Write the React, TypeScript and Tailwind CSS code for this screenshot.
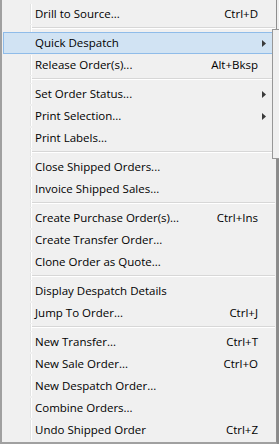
import React from "react";

type Item =
  | { type: "sep" }
  | { type: "item"; label: string; shortcut?: string; sub?: boolean; active?: boolean };

const items: Item[] = [
  { type: "item", label: "Drill to Source...", shortcut: "Ctrl+D" },
  { type: "sep" },
  { type: "item", label: "Quick Despatch", sub: true, active: true },
  { type: "item", label: "Release Order(s)...", shortcut: "Alt+Bksp" },
  { type: "sep" },
  { type: "item", label: "Set Order Status...", sub: true },
  { type: "item", label: "Print Selection...", sub: true },
  { type: "item", label: "Print Labels..." },
  { type: "sep" },
  { type: "item", label: "Close Shipped Orders..." },
  { type: "item", label: "Invoice Shipped Sales..." },
  { type: "sep" },
  { type: "item", label: "Create Purchase Order(s)...", shortcut: "Ctrl+Ins" },
  { type: "item", label: "Create Transfer Order..." },
  { type: "item", label: "Clone Order as Quote..." },
  { type: "sep" },
  { type: "item", label: "Display Despatch Details" },
  { type: "item", label: "Jump To Order...", shortcut: "Ctrl+J" },
  { type: "sep" },
  { type: "item", label: "New Transfer...", shortcut: "Ctrl+T" },
  { type: "item", label: "New Sale Order...", shortcut: "Ctrl+O" },
  { type: "item", label: "New Despatch Order..." },
  { type: "item", label: "Combine Orders..." },
  { type: "item", label: "Undo Shipped Order", shortcut: "Ctrl+Z" },
];

function Arrow() {
  return (
    <svg width="4" height="7" viewBox="0 0 4 7" className="block">
      <polygon points="0,0 4,3.5 0,7" fill="#3a3a3a" />
    </svg>
  );
}

export default function App() {
  return (
    <div
      className="relative w-[279px] h-[444px] overflow-hidden bg-[#f0f0f0] flex text-black"
      style={{ fontFamily: '"Open Sans", "Noto Sans", sans-serif' }}
    >
      <div className="w-[277px] h-[444px] border-l-2 border-b-2 border-r border-l-[#a0a0a0] border-b-[#a0a0a0] border-r-[#8e8e8e] pl-px pr-px pt-[3px] flex flex-col">
        {items.map((it, i) =>
          it.type === "sep" ? (
            <div key={i} className="h-[7px] flex shrink-0">
              <div className="w-[28px] border-r border-[#e2e3e3]" />
              <div className="flex-1 border-l border-white">
                <div className="mt-[2px] h-px bg-[#d7d7d7]" />
                <div className="h-px bg-white" />
              </div>
            </div>
          ) : (
            <div
              key={i}
              className={
                "h-[22px] shrink-0 flex border " +
                (it.active ? "bg-[#d1e3f3] border-[#8fbce9]" : "border-transparent")
              }
            >
              <div className={"w-[27px] border-r " + (it.active ? "border-transparent" : "border-[#e2e3e3]")} />
              <div
                className={
                  "flex-1 flex items-center border-l pl-[3px] text-[11.5px] leading-none " +
                  (it.active ? "border-transparent" : "border-white")
                }
              >
                <span className="flex-1 whitespace-nowrap">{it.label}</span>
                {it.shortcut && <span className="whitespace-nowrap">{it.shortcut}</span>}
                <div className="w-[16px] pl-[4px] flex items-center">{it.sub && <Arrow />}</div>
              </div>
            </div>
          )
        )}
      </div>
      <div className="w-[2px] flex flex-col">
        <div className="h-[29px] bg-[#f0f0f0]" />
        <div className="flex-1 bg-[#8a8a8a]" />
      </div>
      <div className="absolute left-[272px] top-[29px] w-[12px] h-[130px] border border-[#979797] bg-[#f0f0f0]" />
    </div>
  );
}
